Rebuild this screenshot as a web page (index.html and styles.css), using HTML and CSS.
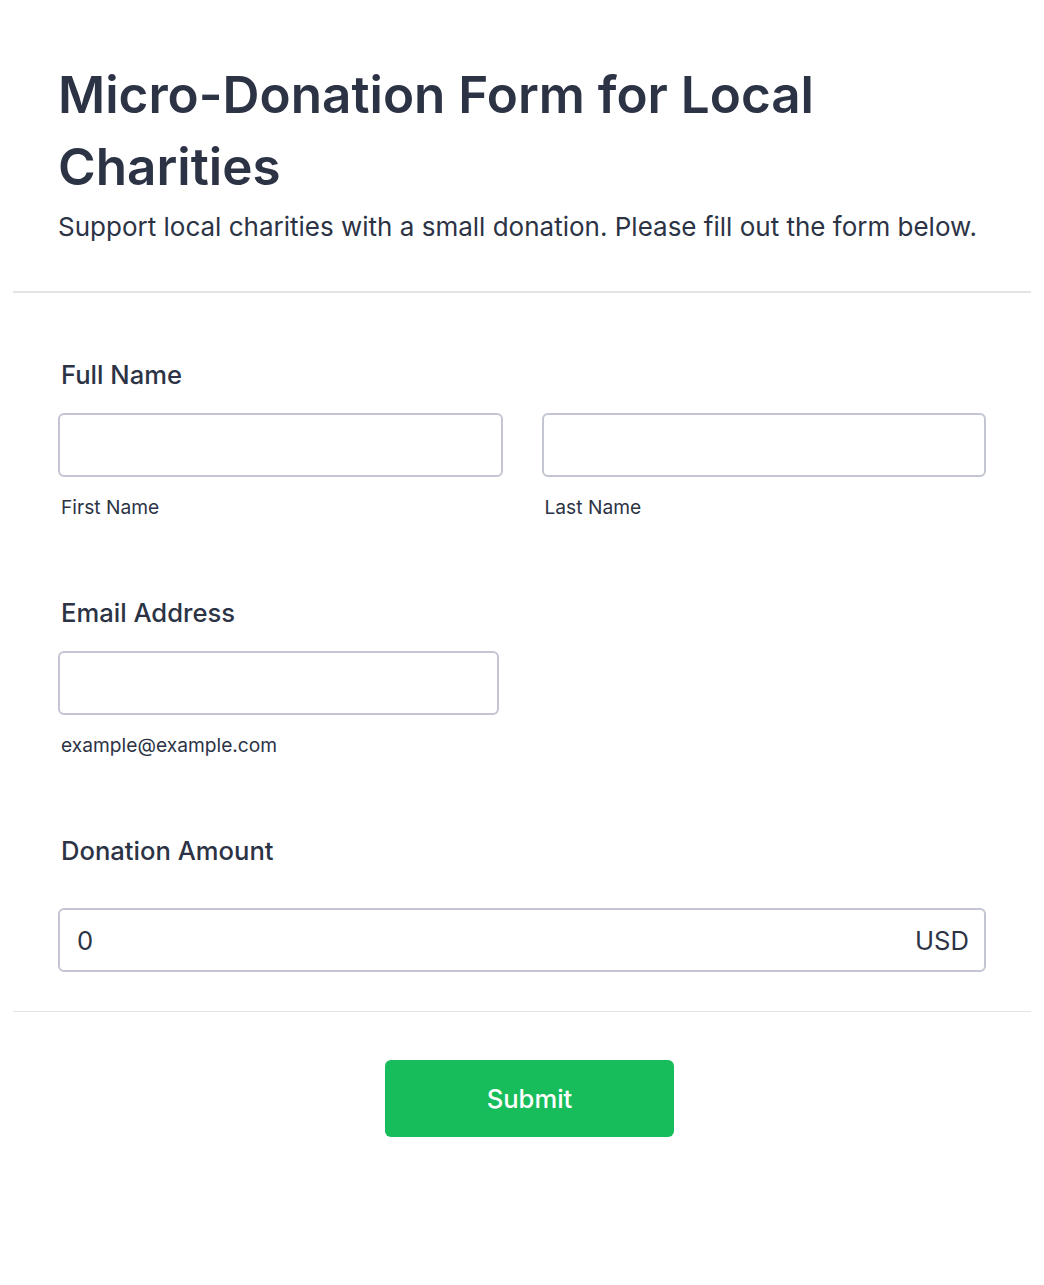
FILE: index.html
```html
<!DOCTYPE html>
<html lang="en">
<head>
<meta charset="utf-8">
<title>Micro-Donation Form for Local Charities</title>
<link rel="stylesheet" href="styles.css">
</head>
<body>
<div class="form">
  <header class="header">
    <h1 class="title">Micro-Donation Form for Local Charities</h1>
    <p class="subtitle">Support local charities with a small donation. Please fill out the form below.</p>
  </header>
  <div class="fields">
    <div class="field">
      <label class="label">Full Name</label>
      <div class="row">
        <div class="col">
          <div class="input"></div>
          <span class="sublabel">First Name</span>
        </div>
        <div class="col">
          <div class="input"></div>
          <span class="sublabel">Last Name</span>
        </div>
      </div>
    </div>
    <div class="field">
      <label class="label">Email Address</label>
      <div class="email-col">
        <div class="input"></div>
        <span class="sublabel">example@example.com</span>
      </div>
    </div>
    <div class="field field-last">
      <label class="label label-amount">Donation Amount</label>
      <div class="input amount">
        <span class="amount-value">0</span>
        <span class="amount-cur">USD</span>
      </div>
    </div>
  </div>
  <div class="actions">
    <button class="submit" type="button">Submit</button>
  </div>
</div>
</body>
</html>
```
FILE: styles.css
```css
html, body {
  margin: 0;
  padding: 0;
  background: #ffffff;
}
body {
  font-family: Inter, "Noto Sans", sans-serif;
  color: #2c3345;
}
.form {
  margin: 0 13px;
}
.header {
  padding: 58px 45px 46px;
  border-bottom: 2px solid #e3e4e8;
}
.title {
  margin: 0;
  font-size: 51.2px;
  line-height: 72px;
  font-weight: 600;
  color: #2c3345;
}
.subtitle {
  margin: 7px 0 0;
  font-size: 26px;
  line-height: 36px;
  font-weight: 400;
}
.fields {
  padding: 64px 45px 39px;
  border-bottom: 1px solid #e3e4e8;
}
.field {
  display: flex;
  flex-direction: column;
  margin-bottom: 74px;
}
.field-last {
  margin-bottom: 0;
}
.label {
  font-size: 25.6px;
  line-height: 36px;
  font-weight: 500;
  padding-left: 3px;
  margin-bottom: 20px;
}
.label-amount {
  margin-bottom: 39px;
}
.row {
  display: flex;
  gap: 39px;
}
.col {
  flex: 1;
  display: flex;
  flex-direction: column;
}
.email-col {
  width: 441px;
  display: flex;
  flex-direction: column;
}
.input {
  height: 64px;
  box-sizing: border-box;
  border: 2px solid #c3c6d2;
  border-radius: 6px;
  background: #fff;
}
.sublabel {
  font-size: 19.2px;
  line-height: 27px;
  padding-left: 3px;
  margin-top: 17px;
  color: #2c3345;
}
.amount {
  display: flex;
  align-items: center;
  justify-content: space-between;
  padding: 0 15px 0 17px;
  font-size: 25.6px;
}
.actions {
  display: flex;
  justify-content: center;
  padding: 48px 0 0 15px;
}
.submit {
  width: 289px;
  height: 77px;
  border: none;
  border-radius: 6px;
  background: #18bd5b;
  color: #ffffff;
  font-family: Inter, "Noto Sans", sans-serif;
  font-size: 25.6px;
  font-weight: 500;
}
```
